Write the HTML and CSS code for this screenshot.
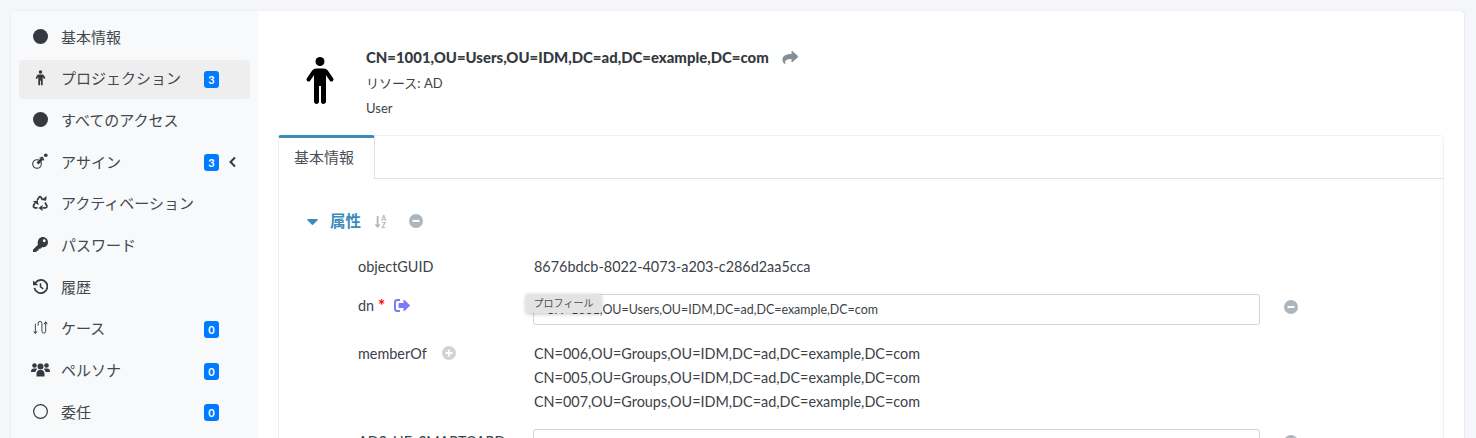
FILE: index.html
```html
<!DOCTYPE html>
<html lang="ja">
<head>
<meta charset="utf-8">
<title>Projection</title>
<link rel="stylesheet" href="styles.css">
</head>
<body>
<div class="card">
  <aside class="side">
    <ul class="nav">
      <li class="nav-item"><span class="ni"><svg width="15" height="15" viewBox="0 0 16 16"><circle cx="8" cy="8" r="8" fill="#343a40"/></svg></span><span class="nt">基本情報</span></li>
      <li class="nav-item active"><span class="ni"><svg width="11" height="16" viewBox="0 0 24 36"><circle cx="12" cy="4.500" r="4" fill="#343a40"/><path fill="#343a40" d="M8 10h8c2 0 3 1 4 2.500l3 6-3 1.500-3-4.500v19h-4V24h-2v10.500H7v-19L4 20l-3-1.500 3-6C5 11 6 10 8 10z"/></svg></span><span class="nt">プロジェクション</span><span class="badge">3</span></li>
      <li class="nav-item"><span class="ni"><svg width="15" height="15" viewBox="0 0 16 16"><circle cx="8" cy="8" r="8" fill="#343a40"/></svg></span><span class="nt">すべてのアクセス</span></li>
      <li class="nav-item"><span class="ni"><svg width="16" height="16" viewBox="0 0 16 16" fill="none" stroke="#343a40" stroke-width="1.100"><circle cx="5" cy="11" r="4.300"/><path d="M5.500 10.500L10.500 5.500" stroke-width="2.600"/><path d="M7.500 5.200l3-1 1.300 3.200" stroke-width="1.100"/><circle cx="13.800" cy="2.200" r="1.800" fill="#343a40" stroke="none"/></svg></span><span class="nt">アサイン</span><span class="badge">3</span><svg class="chev" width="9" height="12" viewBox="0 0 9 12"><path d="M7 1.500L2.500 6 7 10.500" fill="none" stroke="#343a40" stroke-width="2"/></svg></li>
      <li class="nav-item"><span class="ni"><svg width="16" height="16" viewBox="0 0 16 16" fill="none" stroke="#343a40" stroke-width="1.700"><path d="M5.200 5.400L7 2.300c.5-.8 1.500-.8 2 0l1.300 2.200"/><path d="M13 7.500l1.700 3c.6 1.200-.1 2.300-1.300 2.300h-2.700"/><path d="M5.500 12.800H3c-1.200 0-2-1.200-1.400-2.300l1.400-2.700"/><path fill="#343a40" stroke="none" d="M9 5l5 .8L14.800 1zM.8 6.300l5-.8.8 4.700zM10.500 10v6l-4-3z"/></svg></span><span class="nt">アクティベーション</span></li>
      <li class="nav-item"><span class="ni"><svg width="15" height="15" viewBox="0 0 512 512"><path fill="#343a40" d="M512 176c0 97-79 176-176 176-11 0-22-1-33-3l-36 41c-5 5-11 8-18 8h-57v48c0 13-11 24-24 24h-48v48c0 13-11 24-24 24H24c-13 0-24-11-24-24v-78c0-6 3-12 7-17L169 261c-6-18-9-37-9-57C160 79 239 0 336 0s176 79 176 176zm-176-48c0 26 22 48 48 48s48-22 48-48-22-48-48-48-48 22-48 48z"/></svg></span><span class="nt">パスワード</span></li>
      <li class="nav-item"><span class="ni"><svg width="15" height="15" viewBox="0 0 16 16" fill="none" stroke="#343a40" stroke-width="1.900"><path d="M2.500 4.200A7 7 0 1 1 1.500 9.500"/><path fill="#343a40" stroke="none" d="M0 1.500l5.800 5.200H0z"/><path d="M8 4.500V8.500L11 10.500" stroke-width="1.600"/></svg></span><span class="nt">履歴</span></li>
      <li class="nav-item"><span class="ni"><svg width="15" height="15" viewBox="0 0 16 16" fill="none" stroke="#343a40" stroke-width="1"><path d="M2.500 4v10M.8 12l1.700 2.500L4.200 12"/><path d="M5.500 6v-2.500a2 2 0 0 1 4 0V12a2 2 0 0 0 4 0V2M11.800 4.500L13.500 1.800l1.700 2.700"/></svg></span><span class="nt">ケース</span><span class="badge">0</span></li>
      <li class="nav-item"><span class="ni"><svg width="19" height="15" viewBox="0 0 19 15"><g fill="#343a40"><circle cx="3.500" cy="3.500" r="2.300"/><circle cx="15.500" cy="3.500" r="2.300"/><circle cx="9.500" cy="4.500" r="3"/><path d="M0 9.500c0-2 1-3 3-3h2.500c.5 0 .5.500.2 1C5 8.500 4.500 9 4.500 10H0zM19 9.500c0-2-1-3-3-3h-2.500c-.5 0-.5.500-.2 1 .7 1 1.200 1.500 1.200 2.500H19zM5.500 12c0-2.500 1.500-4 3-4h2c1.500 0 3 1.500 3 4v2.500h-8z"/></g></svg></span><span class="nt">ペルソナ</span><span class="badge">0</span></li>
      <li class="nav-item"><span class="ni"><svg width="15" height="15" viewBox="0 0 16 16"><circle cx="8" cy="8" r="7.300" fill="none" stroke="#343a40" stroke-width="1.300"/></svg></span><span class="nt">委任</span><span class="badge">0</span></li>
    </ul>
  </aside>
  <main class="main">
    <header class="head">
      <span class="person"><svg width="30" height="47" viewBox="0 0 30 47"><circle cx="15" cy="4.500" r="4.500" fill="#000"/><path fill="none" stroke="#000" stroke-width="4" stroke-linecap="round" stroke-linejoin="round" d="M3.500 22.500L9 14.500c.6-.8 1.200-1 2-1h8c.8 0 1.400.2 2 1l5.500 8"/><path fill="#000" d="M9 12h12v32.500c0 1.500-1.200 2.500-2.700 2.500S16 46 16 44.500V29h-2v15.500c0 1.500-1 2.500-2.400 2.500S9 46 9 44.500z"/></svg></span>
      <div class="info">
        <div class="title"><b>CN=1001,OU=Users,OU=IDM,DC=ad,DC=example,DC=com</b><svg class="share" width="16" height="13" viewBox="0 0 16 13"><path fill="#868e96" d="M15.700 4.700L10.500.2C10 -.2 9.500.1 9.500.7v2.400C4.500 3.200.5 4.200.5 9c0 1.800 1.200 3.300 2.200 4 .3.200.7 0 .6-.4-.8-3.500 1.500-4.500 6.200-4.600v2.500c0 .6.500.9 1 .5l5.200-4.500c.3-.4.300-1.500 0-1.800z"/></svg></div>
        <div class="sub">リソース: AD</div>
        <div class="sub">User</div>
      </div>
    </header>
    <section class="tabs">
      <div class="tabbar"><div class="tab">基本情報</div></div>
      <div class="body">
        <div class="sect">
          <svg class="caret" width="11" height="6" viewBox="0 0 11 6"><path fill="#3c8dbc" d="M1 0h9c.8 0 1 .8.600 1.300L6 5.700c-.3.300-.7.300-1 0L.4 1.300C0 .8.200 0 1 0z"/></svg>
          <span class="sect-t">属性</span>
          <svg class="sort" width="14" height="13" viewBox="0 0 14 13"><g fill="#adb5bd"><path d="M2.700 1h1.800v8.500H6.600L3.600 13 .6 9.500h2.100z"/></g><text x="7.200" y="5.800" class="az">A</text><text x="7.500" y="13" class="az">Z</text></svg>
          <svg class="cir" width="14" height="14" viewBox="0 0 14 14"><circle cx="7" cy="7" r="7" fill="#adb5bd"/><rect x="3.500" y="6" width="7" height="2" rx=".6" fill="#fff"/></svg>
        </div>
        <div class="row r1"><div class="lab">objectGUID</div><div class="val"><span class="vtext">8676bdcb-8022-4073-a203-c286d2aa5cca</span></div></div>
        <div class="row r2"><div class="lab">dn<span class="req">*</span><svg class="out" width="16" height="13" viewBox="0 0 16 13"><path fill="#7b7bf7" d="M3 0h3v2H3.300C2.600 2 2 2.600 2 3.300v6.400C2 10.400 2.600 11 3.300 11H6v2H3c-1.700 0-3-1.300-3-3V3c0-1.700 1.300-3 3-3z"/><path fill="#7b7bf7" d="M15.700 7L10.500 12c-.4.400-1 .1-1-.5V9H5.500C5 9 4.500 8.600 4.500 8V5c0-.5.500-1 1-1h4V1.500c0-.6.600-.9 1-.5l5.200 5c.4.300.4.700 0 1z"/></svg></div><div class="val"><div class="input">CN=1001,OU=Users,OU=IDM,DC=ad,DC=example,DC=com</div><span class="tip">プロフィール</span></div><svg class="cir rm" width="14" height="14" viewBox="0 0 14 14"><circle cx="7" cy="7" r="7" fill="#adb5bd"/><rect x="3.500" y="6" width="7" height="2" rx=".6" fill="#fff"/></svg></div>
        <div class="row r3"><div class="lab">memberOf<svg class="plus" width="14" height="14" viewBox="0 0 14 14"><circle cx="7" cy="7" r="7" fill="#ced4da"/><path d="M3.500 7h7M7 3.500v7" stroke="#fff" stroke-width="1.800"/></svg></div><div class="val vlist"><div>CN=006,OU=Groups,OU=IDM,DC=ad,DC=example,DC=com</div><div>CN=005,OU=Groups,OU=IDM,DC=ad,DC=example,DC=com</div><div>CN=007,OU=Groups,OU=IDM,DC=ad,DC=example,DC=com</div></div></div>
        <div class="row r4"><div class="lab">ADS_UF_SMARTCARD</div><div class="val"><div class="input"></div></div><svg class="cir rm" width="14" height="14" viewBox="0 0 14 14"><circle cx="7" cy="7" r="7" fill="#adb5bd"/><rect x="3.500" y="6" width="7" height="2" rx=".6" fill="#fff"/></svg></div>
      </div>
    </section>
  </main>
</div>
</body>
</html>
```
FILE: styles.css
```css
* { box-sizing: border-box; }
html, body { height: 100%; }
body {
  margin: 0;
  padding: 11px 12px 0 11px;
  background: #f4f6f9;
  font-family: "Lato", "Noto Sans CJK JP", sans-serif;
  font-size: 14.400px;
  color: #3c4248;
  overflow: hidden;
  height: 438px;
}
.card {
  display: flex;
  height: 600px;
  background: #fff;
  border-radius: 4px;
  box-shadow: 0 0 1px rgba(0,0,0,.2), 0 1px 2px rgba(0,0,0,.08);
  overflow: hidden;
}
.side {
  width: 247px;
  flex: none;
  background: #f8f9fa;
  padding: 7px 8px 0;
}
.nav {
  list-style: none;
  margin: 0;
  padding: 0;
  display: flex;
  flex-direction: column;
  gap: 2.700px;
}
.nav-item {
  display: flex;
  align-items: center;
  height: 39px;
  border-radius: 4px;
  padding: 0 0 3px 11px;
  font-family: "Noto Sans CJK JP", sans-serif;
  font-size: 15px;
  color: #343a40;
}
.active { background: #eeeeee; }
.ni { width: 20px; margin-right: 11px; flex: none; display: flex; justify-content: center; }
.nt { width: 143px; flex: none; white-space: nowrap; color: #42484e; }
.badge {
  width: 15px;
  height: 17px;
  margin-top: 3px;
  border-radius: 3px;
  background: #007bff;
  color: #fff;
  font: 700 11px/17px "Lato", sans-serif;
  text-align: center;
  flex: none;
}
.chev { margin-left: 9px; margin-top: 1px; }
.main { flex: 1; padding: 0 20px; min-width: 0; }
.head { display: flex; height: 124px; }
.person { width: 88px; padding: 46px 0 0 27px; flex: none; }
.info { padding-top: 32px; }
.title { display: flex; align-items: center; height: 28px; font-size: 14.900px; font-weight: 700; color: #343a40; }
.share { margin-left: 13px; }
.sub { height: 25px; line-height: 25px; font-size: 13px; }
.tabs {
  border: 1px solid #eef0f2;
  border-radius: 4px;
  background: #fff;
  height: 500px;
}
.tabbar {
  height: 44px;
  margin: -1px -1px 0;
  border-bottom: 1px solid #dee2e6;
}
.tab {
  width: 97px;
  height: 44px;
  background: #fff;
  border-top: 3px solid #3c8dbc;
  border-right: 1px solid #dee2e6;
  border-left: 1px solid #eef0f2;
  border-radius: 3px 3px 0 0;
  font-family: "Noto Sans CJK JP", sans-serif;
  font-size: 15px;
  line-height: 38px;
  padding-left: 15px;
  color: #495057;
}
.sect { display: flex; align-items: center; height: 28px; margin-top: 28px; padding-left: 28px; }
.caret { flex: none; margin-top: 2px; }
.sect-t { margin-left: 12px; color: #3c8dbc; font-family: "Noto Sans CJK JP", sans-serif; font-size: 15.500px; font-weight: 700; margin-top: -3px; }
.sort { margin-left: 13px; }
.az { font: 700 7px "Lato", sans-serif; fill: #adb5bd; }
.cir { flex: none; }
.sect .cir { margin-left: 21px; }
.row { display: flex; padding-left: 79px; }
.lab { width: 175px; flex: none; display: flex; align-items: center; height: 22px; white-space: nowrap; }
.val { position: relative; width: 728px; flex: none; }
.vtext, .vlist { margin-left: 1px; }
.r1 { margin-top: 20px; line-height: 24px; }
.r1 .lab { height: 24px; }
.r1 .val { height: 24px; }
.r2 { margin-top: 15px; }
.req { color: #f00; font-weight: 700; font-size: 17px; margin-left: 4px; line-height: 1; }
.out { margin-left: 9px; }
.input {
  width: 727px;
  height: 31px;
  border: 1px solid #ced4da;
  border-radius: 3px;
  padding-left: 12px;
  line-height: 29px;
  font-size: 12.450px;
  background: #fff;
}
.tip {
  position: absolute;
  left: -7px;
  top: 0;
  width: 75px;
  height: 19px;
  background: #e3e3e3;
  border-radius: 3px;
  box-shadow: 0 1px 4px rgba(0,0,0,.25);
  font-family: "Noto Sans CJK JP", sans-serif;
  font-size: 10px;
  line-height: 18px;
  text-align: center;
  color: #495057;
}
.rm { margin-left: 23px; margin-top: 6px; }
.r3 { margin-top: 17px; }
.plus { margin-left: 15px; }
.vlist { line-height: 24px; }
.r4 { margin-top: 15px; }
.r4 .lab { height: 24px; }
```
